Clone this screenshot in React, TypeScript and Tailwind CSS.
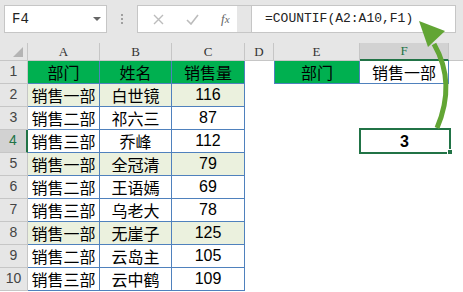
import React from "react";

const CJK = { fontFamily: '"Noto Sans CJK SC", "Noto Sans", sans-serif' };
const NUM = { fontFamily: '"Liberation Sans", Arial, sans-serif' };
const MONO = { fontFamily: '"Liberation Mono", "Courier New", monospace' };
const SERIF = { fontFamily: '"Liberation Serif", "Times New Roman", serif' };

const data: [string, string, number][] = [
  ["销售一部", "白世镜", 116],
  ["销售二部", "祁六三", 87],
  ["销售三部", "乔峰", 112],
  ["销售一部", "全冠清", 79],
  ["销售二部", "王语嫣", 69],
  ["销售三部", "乌老大", 78],
  ["销售一部", "无崖子", 125],
  ["销售二部", "云岛主", 105],
  ["销售三部", "云中鹤", 109],
];

function RowHeader({ n, selected }: { n: number; selected?: boolean }) {
  return (
    <div
      className={
        selected
          ? "w-[28px] shrink-0 h-full flex items-end justify-center pb-[1px] bg-[#d2d2d2] text-[#217346] border-b border-[#c6c6c6] border-r-2 border-r-[#217346] text-[14px]"
          : "w-[28px] shrink-0 h-full flex items-end justify-center pb-[1px] bg-[#e6e6e6] text-[#444] border-b border-r border-[#c6c6c6] text-[14px]"
      }
      style={NUM}
    >
      {n}
    </div>
  );
}

export default function App() {
  return (
    <div className="relative w-[463px] h-[292px] overflow-hidden bg-white">
      {/* toolbar */}
      <div className="h-[43px] bg-[#e6e6e6] flex items-start pt-[5px]">
        <div className="ml-[4px] w-[103px] h-[28px] bg-white border border-[#c6c6c6] flex items-center justify-between pl-[7px] pr-[5px]">
          <span className="text-[14px] text-[#222]" style={MONO}>F4</span>
          <svg width="8" height="5" viewBox="0 0 8 5">
            <polygon points="0,0 8,0 4,4" fill="#666" />
          </svg>
        </div>
        <div className="w-[30px] h-[28px] flex flex-col items-center justify-center gap-[2px]">
          <div className="w-[2px] h-[2px] bg-[#a0a0a0]" />
          <div className="w-[2px] h-[2px] bg-[#a0a0a0]" />
          <div className="w-[2px] h-[2px] bg-[#a0a0a0]" />
        </div>
        <div className="w-[100px] h-[28px] bg-white border border-r-0 border-[#c6c6c6] flex items-center">
          <svg className="ml-[15px]" width="11" height="11" viewBox="0 0 11 11">
            <path d="M1 1 L10 10 M10 1 L1 10" stroke="#bcbcbc" strokeWidth="1.4" />
          </svg>
          <svg className="ml-[22px]" width="13" height="11" viewBox="0 0 13 11">
            <path d="M1 6 L5 10 L12 1" stroke="#bcbcbc" strokeWidth="1.6" fill="none" />
          </svg>
          <span className="ml-[22px] text-[13px] italic text-[#666]" style={SERIF}>
            f<span className="text-[11px]">x</span>
          </span>
        </div>
        <div className="w-[14px] h-[28px] border-y border-[#c6c6c6] bg-[#e6e6e6]" />
        <div className="w-[205px] h-[28px] bg-white border border-[#c6c6c6] flex items-center pl-[13px]">
          <span className="text-[13px] text-[#222] whitespace-nowrap" style={MONO}>
            =COUNTIF(A2:A10,F1)
          </span>
        </div>
      </div>

      {/* column header row */}
      <div className="h-[18px] flex bg-[#e6e6e6] text-[13px] text-[#333]" style={SERIF}>
        <div className="w-[28px] shrink-0 border-r border-b border-[#c6c6c6] relative">
          <svg className="absolute right-[4px] bottom-[3px]" width="10" height="10" viewBox="0 0 10 10">
            <polygon points="10,0 10,10 0,10" fill="#b4b4b4" />
          </svg>
        </div>
        <div className="w-[72px] shrink-0 border-r border-b border-[#c6c6c6] flex items-center justify-center">A</div>
        <div className="w-[72px] shrink-0 border-r border-b border-[#c6c6c6] flex items-center justify-center">B</div>
        <div className="w-[73px] shrink-0 border-r border-b border-[#c6c6c6] flex items-center justify-center">C</div>
        <div className="w-[29px] shrink-0 border-r border-b border-[#c6c6c6] flex items-center justify-center">D</div>
        <div className="w-[86px] shrink-0 border-r border-b border-[#c6c6c6] flex items-center justify-center">E</div>
        <div className="w-[89px] shrink-0 border-r border-[#c6c6c6] border-b-2 border-b-[#217346] bg-[#d2d2d2] text-[#217346] flex items-center justify-center">F</div>
        <div className="flex-1 border-b border-[#c6c6c6]" />
      </div>

      {/* row 1 */}
      <div className="h-[23px] flex text-[16px] text-black">
        <RowHeader n={1} />
        <div className="w-[72px] shrink-0 bg-[#00b050] border-r border-b border-[#4f81bd] flex items-center justify-center" style={CJK}>部门</div>
        <div className="w-[72px] shrink-0 bg-[#00b050] border-r border-b border-[#4f81bd] flex items-center justify-center" style={CJK}>姓名</div>
        <div className="w-[73px] shrink-0 bg-[#00b050] border-r border-b border-[#4f81bd] flex items-center justify-center" style={CJK}>销售量</div>
        <div className="w-[29px] shrink-0" />
        <div className="w-[86px] shrink-0 bg-[#00b050] border-x border-b border-[#4f81bd] flex items-center justify-center" style={CJK}>部门</div>
        <div className="w-[89px] shrink-0 bg-white border-r border-b border-[#4f81bd] flex items-center justify-center" style={CJK}>销售一部</div>
        <div className="flex-1" />
      </div>

      {data.map(([dept, name, qty], i) => {
        const row = i + 2;
        const shaded = dept === "销售一部";
        const bg = shaded ? "bg-[#ebf1de]" : "bg-white";
        return (
          <div key={row} className="h-[23px] flex text-[16px] text-black">
            <RowHeader n={row} selected={row === 4} />
            <div className={`w-[72px] shrink-0 ${bg} border-r border-b border-[#4f81bd] flex items-center justify-center`} style={CJK}>{dept}</div>
            <div className={`w-[72px] shrink-0 ${bg} border-r border-b border-[#4f81bd] flex items-center justify-center`} style={CJK}>{name}</div>
            <div className={`w-[73px] shrink-0 ${bg} border-r border-b border-[#4f81bd] flex items-center justify-center`} style={NUM}>{qty}</div>
            <div className="w-[29px] shrink-0" />
            <div className="w-[86px] shrink-0" />
            {row === 4 ? (
              <div className="relative w-[89px] shrink-0 flex items-center justify-center font-bold" style={NUM}>
                <div className="absolute -left-[1px] -top-[2px] w-[92px] h-[26px] border-2 border-[#217346]" />
                <div className="absolute -right-[4px] bottom-[-2px] w-[6px] h-[6px] bg-[#217346] border border-white" />
                3
              </div>
            ) : (
              <div className="w-[89px] shrink-0" />
            )}
            <div className="flex-1" />
          </div>
        );
      })}

      {/* green arrow */}
      <svg className="absolute left-0 top-0 pointer-events-none" width="463" height="292" viewBox="0 0 463 292">
        <path d="M437 128 C 449 100, 450 72, 434 44" stroke="#62a534" strokeWidth="5" fill="none" strokeLinecap="butt" />
        <polygon points="419,21 445,31 428,47" fill="#62a534" />
      </svg>
    </div>
  );
}
